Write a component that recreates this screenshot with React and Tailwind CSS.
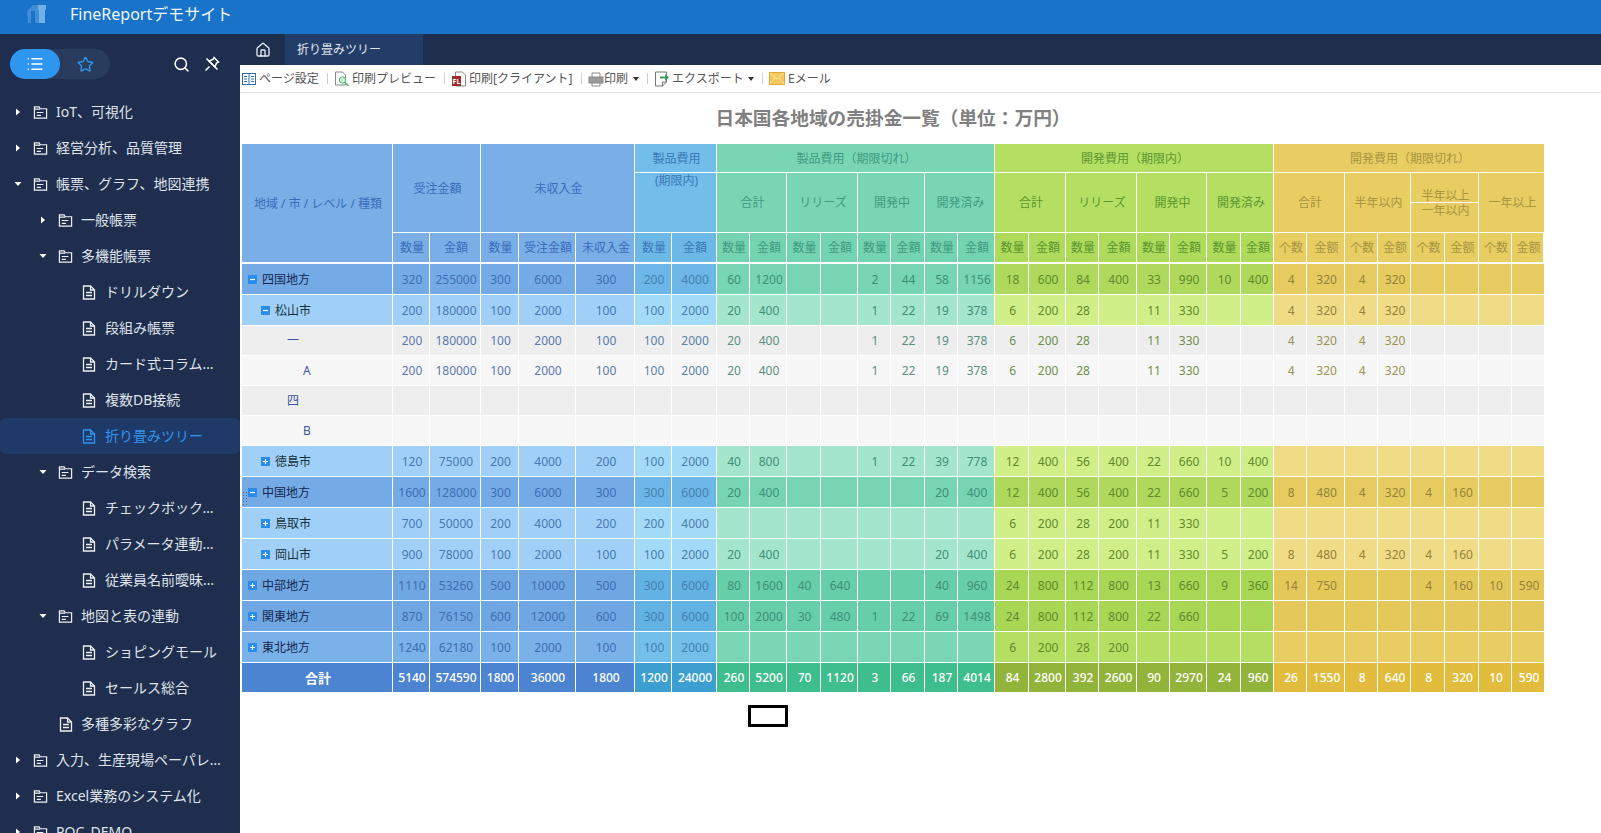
import { Home, Search, Star, List } from 'lucide-react'

const NAV = [
  { label: 'IoT、可視化', depth: 0, type: 'closed' },
  { label: '経営分析、品質管理', depth: 0, type: 'closed' },
  { label: '帳票、グラフ、地図連携', depth: 0, type: 'open' },
  { label: '一般帳票', depth: 1, type: 'closed' },
  { label: '多機能帳票', depth: 1, type: 'open' },
  { label: 'ドリルダウン', depth: 2, type: 'file' },
  { label: '段組み帳票', depth: 2, type: 'file' },
  { label: 'カード式コラムレポート', depth: 2, type: 'file' },
  { label: '複数DB接続', depth: 2, type: 'file' },
  { label: '折り畳みツリー', depth: 2, type: 'file', active: true },
  { label: 'データ検索', depth: 1, type: 'open' },
  { label: 'チェックボックス検索', depth: 2, type: 'file' },
  { label: 'パラメータ連動検索', depth: 2, type: 'file' },
  { label: '従業員名前曖昧検索', depth: 2, type: 'file' },
  { label: '地図と表の連動', depth: 1, type: 'open' },
  { label: 'ショピングモール', depth: 2, type: 'file' },
  { label: 'セールス総合', depth: 2, type: 'file' },
  { label: '多種多彩なグラフ', depth: 1, type: 'file' },
  { label: '入力、生産現場ペーパレス化', depth: 0, type: 'closed' },
  { label: 'Excel業務のシステム化', depth: 0, type: 'closed' },
  { label: 'POC_DEMO', depth: 0, type: 'closed' },
]

const COLS = [
  'w-[151px]', 'w-[37px]', 'w-[51px]', 'w-[38px]', 'w-[57px]', 'w-[59px]', 'w-[37px]', 'w-[45px]',
  'w-[33px]', 'w-[37px]', 'w-[34px]', 'w-[37px]', 'w-[33px]', 'w-[34px]', 'w-[33px]', 'w-[37px]',
  'w-[34px]', 'w-[37px]', 'w-[33px]', 'w-[38px]', 'w-[33px]', 'w-[37px]', 'w-[34px]', 'w-[33px]',
  'w-[33px]', 'w-[38px]', 'w-[33px]', 'w-[33px]', 'w-[34px]', 'w-[34px]', 'w-[33px]', 'w-[32px]',
]

// one entry per colour band: blue, sky, green, lime, yellow
const TONES = {
  head: ['bg-[#79afe6] text-[#3a6cbb]', 'bg-[#72bde9] text-[#3a78b8]', 'bg-[#79d6b4] text-[#3f9a80]', 'bg-[#b4df62] text-[#5c9630]', 'bg-[#e7cd62] text-[#a89540]'],
  sub: ['bg-[#79afe6] text-[#3a6cbb]', 'bg-[#6cb9e7] text-[#3a78b8]', 'bg-[#74d4b1] text-[#3f9a80]', 'bg-[#aedb5c] text-[#5c9630]', 'bg-[#e7cd62] text-[#a89540]'],
  region: ['bg-[#74abe6] text-[#3f6db3]', 'bg-[#6cb7e7] text-[#4480ae]', 'bg-[#77d5b3] text-[#3f8f78]', 'bg-[#aed95c] text-[#5f8a2c]', 'bg-[#e6cb60] text-[#948339]'],
  city: ['bg-[#a0d0f7] text-[#4a78b5]', 'bg-[#a3daf8] text-[#4a80ad]', 'bg-[#a3e6cd] text-[#3f8f78]', 'bg-[#d0ef88] text-[#5f8a2c]', 'bg-[#f0db87] text-[#948339]'],
  deep: ['bg-[#6fa7e2] text-[#3f6db3]', 'bg-[#62b3e3] text-[#4480ae]', 'bg-[#66cea9] text-[#3f8f78]', 'bg-[#a8d655] text-[#5f8a2c]', 'bg-[#e5c85a] text-[#948339]'],
  soft: ['bg-[#7ab1e8] text-[#3f6db3]', 'bg-[#72bfea] text-[#4480ae]', 'bg-[#7ad7b6] text-[#3f8f78]', 'bg-[#b4df62] text-[#5f8a2c]', 'bg-[#e7cd62] text-[#948339]'],
  grey: ['bg-[#eeeeee] text-[#5a78b0]', 'bg-[#eeeeee] text-[#5a82a8]', 'bg-[#eeeeee] text-[#5a9080]', 'bg-[#eeeeee] text-[#6f8f4a]', 'bg-[#eeeeee] text-[#9a9450]'],
  pale: ['bg-[#f7f7f7] text-[#5a78b0]', 'bg-[#f7f7f7] text-[#5a82a8]', 'bg-[#f7f7f7] text-[#5a9080]', 'bg-[#f7f7f7] text-[#6f8f4a]', 'bg-[#f7f7f7] text-[#9a9450]'],
  total: ['bg-[#4d84d1] text-white', 'bg-[#3d9fcf] text-white', 'bg-[#3ebd8d] text-white', 'bg-[#93b43b] text-white', 'bg-[#e2bc3d] text-white'],
}

const blank8 = ['', '', '', '', '', '', '', '']
const matsuyama = [200, 180000, 100, 2000, 100, 100, 2000, 20, 400, '', '', 1, 22, 19, 378, 6, 200, 28, '', 11, 330, '', '', 4, 320, 4, 320, '', '', '', '']
const empty = Array(31).fill('')

const ROWS = [
  { label: '四国地方', tone: 'region', level: 1, sign: 'minus', h: 'h-[31px]', data: [320, 255000, 300, 6000, 300, 200, 4000, 60, 1200, '', '', 2, 44, 58, 1156, 18, 600, 84, 400, 33, 990, 10, 400, 4, 320, 4, 320, '', '', '', ''] },
  { label: '松山市', tone: 'city', level: 2, sign: 'minus', h: 'h-[31px]', data: matsuyama },
  { label: '一', tone: 'grey', level: 3, h: 'h-[30px]', data: matsuyama },
  { label: 'A', tone: 'pale', level: 4, h: 'h-[30px]', data: matsuyama },
  { label: '四', tone: 'grey', level: 3, h: 'h-[30px]', data: empty },
  { label: 'B', tone: 'pale', level: 4, h: 'h-[30px]', data: empty },
  { label: '徳島市', tone: 'city', level: 2, sign: 'plus', h: 'h-[31px]', data: [120, 75000, 200, 4000, 200, 100, 2000, 40, 800, '', '', 1, 22, 39, 778, 12, 400, 56, 400, 22, 660, 10, 400, ...blank8] },
  { label: '中国地方', tone: 'region', level: 1, sign: 'minus', grip: true, h: 'h-[31px]', data: [1600, 128000, 300, 6000, 300, 300, 6000, 20, 400, '', '', '', '', 20, 400, 12, 400, 56, 400, 22, 660, 5, 200, 8, 480, 4, 320, 4, 160, '', ''] },
  { label: '鳥取市', tone: 'city', level: 2, sign: 'plus', h: 'h-[31px]', data: [700, 50000, 200, 4000, 200, 200, 4000, ...blank8, 6, 200, 28, 200, 11, 330, '', '', ...blank8] },
  { label: '岡山市', tone: 'city', level: 2, sign: 'plus', h: 'h-[31px]', data: [900, 78000, 100, 2000, 100, 100, 2000, 20, 400, '', '', '', '', 20, 400, 6, 200, 28, 200, 11, 330, 5, 200, 8, 480, 4, 320, 4, 160, '', ''] },
  { label: '中部地方', tone: 'deep', level: 1, sign: 'plus', h: 'h-[31px]', data: [1110, 53260, 500, 10000, 500, 300, 6000, 80, 1600, 40, 640, '', '', 40, 960, 24, 800, 112, 800, 13, 660, 9, 360, 14, 750, '', '', 4, 160, 10, 590] },
  { label: '関東地方', tone: 'deep', level: 1, sign: 'plus', h: 'h-[31px]', data: [870, 76150, 600, 12000, 600, 300, 6000, 100, 2000, 30, 480, 1, 22, 69, 1498, 24, 800, 112, 800, 22, 660, '', '', ...blank8] },
  { label: '東北地方', tone: 'soft', level: 1, sign: 'plus', h: 'h-[31px]', data: [1240, 62180, 100, 2000, 100, 100, 2000, ...blank8, 6, 200, 28, 200, '', '', '', '', ...blank8] },
]

const TOTAL = [5140, 574590, 1800, 36000, 1800, 1200, 24000, 260, 5200, 70, 1120, 3, 66, 187, 4014, 84, 2800, 392, 2600, 90, 2970, 24, 960, 26, 1550, 8, 640, 8, 320, 10, 590]

const LABEL_TEXT = {
  1: 'text-[#16284f]',
  2: 'text-[#16303a]',
  3: 'text-[#3d55a8]',
  4: 'text-[#3d55a8]',
}

function bandOf(i) {
  if (i < 5) return 0
  if (i < 7) return 1
  if (i < 15) return 2
  if (i < 23) return 3
  return 4
}

const cell = 'border-r border-b border-white pr-0 pl-[2px] pb-0 pt-px text-center align-middle text-xs leading-none whitespace-nowrap overflow-hidden'

function Caret({ open }) {
  return (
    <svg viewBox="0 0 10 10" className="h-[10px] w-[10px] fill-white">
      {open ? <path d="M1.5 3h7L5 7z" /> : <path d="M3 1.5v7L7 5z" />}
    </svg>
  )
}

function FolderIcon() {
  return (
    <svg viewBox="0 0 16 15" className="h-[15px] w-[15px] shrink-0 fill-none stroke-[#eef0f4] stroke-[1.3]">
      <path d="M1.5 13.5v-12h5l1.2 2h6.8v10z" />
      <path d="M1.5 4h6M4 7.5h7M4 10.5h4.5" />
    </svg>
  )
}

function FileIcon({ active }) {
  return (
    <svg viewBox="0 0 14 15" className={`h-[15px] w-[14px] shrink-0 fill-none stroke-[1.3] ${active ? 'stroke-[#2f94ee]' : 'stroke-[#eef0f4]'}`}>
      <path d="M1.5 1h7l4 4v9h-11z" />
      <path d="M8.5 1v4h4M4 7.5h6M4 10.5h6" />
    </svg>
  )
}

function NavRow({ item }) {
  const isFile = item.type === 'file'
  const indent = item.depth === 0 ? 'pl-[13px]' : item.depth === 1 ? 'pl-[38px]' : 'pl-[82px]'
  const textGap = item.depth === 2 ? 'ml-[9px]' : 'ml-[8px]'
  return (
    <div className={`flex h-[36px] shrink-0 items-center rounded-md pr-[14px] text-sm ${indent} ${item.active ? 'bg-[#1f3a68] text-[#2f94ee]' : 'text-[#dfe3ea]'}`}>
      {!isFile && (
        <span className="mr-[10px] flex w-[10px] shrink-0 justify-center">
          <Caret open={item.type === 'open'} />
        </span>
      )}
      {item.depth === 1 && isFile && <span className="w-[21px] shrink-0" />}
      {isFile ? <FileIcon active={item.active} /> : <FolderIcon />}
      <span className={`truncate ${textGap}`}>{item.label}</span>
    </div>
  )
}

function UnpinIcon() {
  return (
    <svg viewBox="0 0 16 16" className="ml-[14px] h-[16px] w-[16px] fill-none stroke-white stroke-[1.5]">
      <path d="M10 1.5L14.5 6l-2 1-1.5 4-6-6 4-1.5z" />
      <path d="M5.5 10.5L1.5 14.5M2.5 2.5l11 11" />
    </svg>
  )
}

function Sidebar() {
  return (
    <aside className="flex w-[240px] shrink-0 flex-col overflow-hidden bg-[#1f2e4e]">
      <div className="flex h-[60px] shrink-0 items-center pl-[10px]">
        <div className="flex h-[30px] w-[100px] rounded-full bg-[#2a3c5e]">
          <span className="flex h-[30px] w-[50px] items-center justify-center rounded-full bg-[#2e96ee]">
            <List size={18} className="text-white" />
          </span>
          <span className="flex h-[30px] w-[50px] items-center justify-center">
            <Star size={17} className="text-[#2e96ee]" />
          </span>
        </div>
        <Search size={17} strokeWidth={2.2} className="ml-[63px] text-white" />
        <UnpinIcon />
      </div>
      {NAV.map((item) => (
        <NavRow key={item.label} item={item} />
      ))}
    </aside>
  )
}

function PageSetupIcon() {
  return (
    <svg viewBox="0 0 14 12" className="h-[12px] w-[14px] fill-none stroke-[#2f6db5]">
      <rect x="0.5" y="0.5" width="13" height="11" />
      <path d="M7 .5v11M2 3.5h3M2 6h3M2 8.5h3M9 3.5h3M9 6h3M9 8.5h3" />
    </svg>
  )
}

function PreviewIcon() {
  return (
    <svg viewBox="0 0 16 16" className="h-[16px] w-[16px] fill-none">
      <path d="M1.5 1h7l3 3v10h-10z" stroke="#888" />
      <circle cx="8.5" cy="9" r="3.2" fill="#cfeeda" stroke="#4bb86e" />
      <path d="M11 11.5l3.5 3.5" stroke="#4bb86e" strokeWidth="1.6" />
    </svg>
  )
}

function FlashIcon() {
  return (
    <svg viewBox="0 0 16 16" className="h-[16px] w-[16px]">
      <path d="M4.5 1h7l3 3v11h-10z" fill="none" stroke="#888" />
      <rect x="1" y="5" width="9" height="10" fill="#9c2b2b" />
      <text x="5.5" y="13" fontSize="7" fontWeight="700" textAnchor="middle" fill="#fff">FL</text>
    </svg>
  )
}

function PrintIcon() {
  return (
    <svg viewBox="0 0 16 16" className="h-[16px] w-[16px]">
      <path d="M4 6V2h8v4M4 12v3h8v-3" fill="#fff" stroke="#888" />
      <rect x="1" y="6" width="14" height="6" fill="#9a9a9a" stroke="#888" />
    </svg>
  )
}

function ExportIcon() {
  return (
    <svg viewBox="0 0 16 16" className="h-[16px] w-[16px] fill-none">
      <path d="M1.5 1h11v10l-4 4h-7z" stroke="#777" />
      <path d="M8.5 15v-4h4" stroke="#777" />
      <path d="M6 5.5h5V3l4 3.5-4 3.5V7.5H6z" fill="#3f9e5c" />
    </svg>
  )
}

function MailIcon() {
  return (
    <svg viewBox="0 0 16 13" className="h-[13px] w-[16px]">
      <rect x="0.5" y="0.5" width="15" height="12" fill="#f6c65a" stroke="#e0a93a" />
      <path d="M1 1l7 6 7-6M1 12l5-6M15 12l-5-6" fill="none" stroke="#fbe6a8" />
    </svg>
  )
}

const TOOLS = [
  { label: 'ページ設定', icon: <PageSetupIcon />, w: 'w-[92px]', sep: true, gap: 'gap-[3px]' },
  { label: '印刷プレビュー', icon: <PreviewIcon />, w: 'w-[117px]', sep: true, gap: 'gap-[2px]' },
  { label: '印刷[クライアント]', icon: <FlashIcon />, w: 'w-[137px]', sep: true, gap: 'gap-[2px]' },
  { label: '印刷', icon: <PrintIcon />, w: 'w-[66px]', sep: true, caret: 'ml-[5px]' },
  { label: 'エクスポート', icon: <ExportIcon />, w: 'w-[115px]', sep: true, caret: 'ml-[2px]', gap: 'gap-[2px]' },
  { label: 'Eメール', icon: <MailIcon />, w: 'w-[80px]', gap: 'gap-[3px]' },
]

function Toolbar() {
  return (
    <div className="flex h-[28px] shrink-0 items-center border-b border-[#e6e6e6] bg-white pl-[2px] text-xs text-[#555]">
      {TOOLS.map((t) => (
        <div key={t.label} className={`flex items-center ${t.w} ${t.gap ?? ''}`}>
          {t.icon}
          <span className="whitespace-nowrap">{t.label}</span>
          {t.caret && <span className={`border-x-[3px] border-t-[4px] border-x-transparent border-t-[#333] ${t.caret}`} />}
          {t.sep && <span className="mr-[6px] ml-auto h-[11px] w-px bg-[#cfcfcf]" />}
        </div>
      ))}
    </div>
  )
}

function SignBox({ sign }) {
  return (
    <svg viewBox="0 0 9 9" className="mr-[5px] h-[9px] w-[9px] shrink-0">
      <rect width="9" height="9" fill="#2b8dea" />
      <path d={sign === 'minus' ? 'M2 4.5h5' : 'M2 4.5h5M4.5 2v5'} stroke="#fff" strokeWidth="1.2" />
    </svg>
  )
}

function Grip() {
  return (
    <svg viewBox="0 0 5 13" className="absolute top-[15px] left-[1px] h-[13px] w-[5px] fill-[#667]">
      {[0, 3, 6, 9, 12].map((y) => (
        <g key={y}>
          <rect x="0" y={y} width="1" height="1" />
          <rect x="3" y={y} width="1" height="1" />
        </g>
      ))}
    </svg>
  )
}

function RowLabel({ row }) {
  const t = TONES[row.tone][0]
  const color = LABEL_TEXT[row.level]
  if (row.level === 1 || row.level === 2) {
    return (
      <td className={`${cell} ${t} relative`}>
        {row.grip && <Grip />}
        <div className={`flex items-center ${color} ${row.level === 1 ? 'pl-[4px]' : 'pl-[17px]'}`}>
          <SignBox sign={row.sign} />
          {row.label}
        </div>
      </td>
    )
  }
  return (
    <td className={`${cell} ${t}`}>
      <div className={`${color} ${row.level === 3 ? 'pl-[43px]' : 'pl-[59px]'} text-left`}>{row.label}</div>
    </td>
  )
}

function HeadCell({ band, tone = 'head', colSpan, rowSpan, children, className = '' }) {
  return (
    <th colSpan={colSpan} rowSpan={rowSpan} className={`${cell} font-normal ${TONES[tone][band]} ${className}`}>
      {children}
    </th>
  )
}

const QTY = (band) => (
  <>
    <HeadCell band={band} tone="sub">数量</HeadCell>
    <HeadCell band={band} tone="sub">金額</HeadCell>
  </>
)

const COUNT = () => (
  <>
    <HeadCell band={4} tone="sub">个数</HeadCell>
    <HeadCell band={4} tone="sub">金额</HeadCell>
  </>
)

function ReportTable() {
  return (
    <table className="w-[1302px] table-fixed border-separate border-spacing-0">
      <colgroup>
        {COLS.map((w, i) => (
          <col key={i} className={w} />
        ))}
      </colgroup>
      <thead>
        <tr className="h-[29px]">
          <HeadCell band={0} rowSpan={3} className="border-b-2">地域 / 市 / レベル / 種類</HeadCell>
          <HeadCell band={0} colSpan={2} rowSpan={2}>受注金額</HeadCell>
          <HeadCell band={0} colSpan={3} rowSpan={2}>未収入金</HeadCell>
          <HeadCell band={1} colSpan={2}>製品費用</HeadCell>
          <HeadCell band={2} colSpan={8}>製品費用（期限切れ）</HeadCell>
          <HeadCell band={3} colSpan={8}>開発費用（期限内）</HeadCell>
          <HeadCell band={4} colSpan={8} className="border-r-0">開発費用（期限切れ）</HeadCell>
        </tr>
        <tr className="h-[60px]">
          <HeadCell band={1} colSpan={2} className="!pt-[2px] !align-top">(期限内)</HeadCell>
          <HeadCell band={2} colSpan={2}>合計</HeadCell>
          <HeadCell band={2} colSpan={2}>リリーズ</HeadCell>
          <HeadCell band={2} colSpan={2}>開発中</HeadCell>
          <HeadCell band={2} colSpan={2}>開発済み</HeadCell>
          <HeadCell band={3} colSpan={2}>合計</HeadCell>
          <HeadCell band={3} colSpan={2}>リリーズ</HeadCell>
          <HeadCell band={3} colSpan={2}>開発中</HeadCell>
          <HeadCell band={3} colSpan={2}>開発済み</HeadCell>
          <HeadCell band={4} colSpan={2}>合計</HeadCell>
          <HeadCell band={4} colSpan={2}>半年以内</HeadCell>
          <HeadCell band={4} colSpan={2} className="!pl-0">
            <div className="flex flex-col">
              <span className="flex h-[16px] items-center justify-center border-b border-white pt-[4px] pl-[2px]">半年以上</span>
              <span className="flex h-[17px] items-center justify-center pl-[2px]">一年以内</span>
            </div>
          </HeadCell>
          <HeadCell band={4} colSpan={2} className="border-r-0">一年以上</HeadCell>
        </tr>
        <tr className="h-[31px] [&>th]:border-b-2">
          {QTY(0)}
          <HeadCell band={0} tone="sub">数量</HeadCell>
          <HeadCell band={0} tone="sub">受注金額</HeadCell>
          <HeadCell band={0} tone="sub">未収入金</HeadCell>
          {QTY(1)}
          {QTY(2)}
          {QTY(2)}
          {QTY(2)}
          {QTY(2)}
          {QTY(3)}
          {QTY(3)}
          {QTY(3)}
          {QTY(3)}
          {COUNT()}
          {COUNT()}
          {COUNT()}
          {COUNT()}
        </tr>
      </thead>
      <tbody>
        {ROWS.map((row) => (
          <tr key={row.label + row.tone} className={row.h}>
            <RowLabel row={row} />
            {row.data.map((v, i) => (
              <td key={i} className={`${cell} ${TONES[row.tone][bandOf(i)]} ${i === 30 ? 'border-r-0' : ''}`}>{v}</td>
            ))}
          </tr>
        ))}
        <tr className="h-[29px]">
          <td className={`${cell} ${TONES.total[0]} border-b-0 text-[13px] font-bold`}>合計</td>
          {TOTAL.map((v, i) => (
            <td key={i} className={`${cell} ${TONES.total[bandOf(i)]} border-b-0 font-medium ${i === 30 ? 'border-r-0' : ''}`}>{v}</td>
          ))}
        </tr>
      </tbody>
    </table>
  )
}

export default function App() {
  return (
    <div className="flex h-screen w-full flex-col overflow-hidden bg-white font-['Noto_Sans','Noto_Sans_CJK_JP',sans-serif]">
      <header className="flex h-[34px] shrink-0 items-center bg-[#1873c9] pb-[6px] pl-[27px] text-white">
        <svg viewBox="0 0 19 18" className="h-[18px] w-[19px]">
          <path d="M0 6l6-6h6v18H8V6H4v12H1z" fill="#3f8dd6" />
          <path d="M11 0h8v5h-1v13h-6V5h-1z" fill="#6fb2ea" />
        </svg>
        <span className="ml-[24px] text-[16px] text-[#f2f6fb]">FineReportデモサイト</span>
      </header>
      <div className="flex min-h-0 flex-1">
        <Sidebar />
        <main className="flex min-w-0 flex-1 flex-col">
          <div className="flex h-[31px] shrink-0 bg-[#1e2f4e]">
            <div className="flex w-[45px] items-center justify-center">
              <Home size={16} className="text-[#e8ecf2]" />
            </div>
            <div className="flex w-[138px] items-center bg-[#223d68] pl-[12px] text-xs text-[#e2e6ec]">折り畳みツリー</div>
          </div>
          <Toolbar />
          <div className="flex-1 pl-[2px]">
            <h1 className="flex h-[51px] w-[1302px] items-center justify-center text-[18.7px] font-bold text-[#808080]">
              日本国各地域の売掛金一覧（単位：万円）
            </h1>
            <ReportTable />
            <div className="mt-[13px] ml-[506px] h-[22px] w-[40px] border-[3px] border-black" />
          </div>
        </main>
      </div>
    </div>
  )
}
